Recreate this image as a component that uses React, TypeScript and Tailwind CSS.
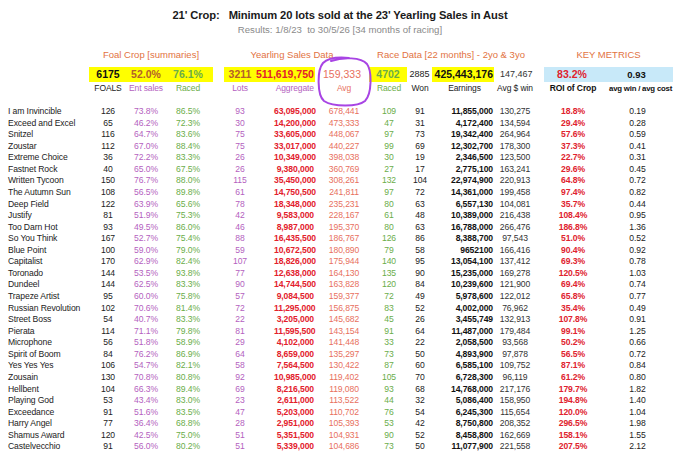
const rows: string[][] = [
  ["I am Invincible", "126", "73.8%", "86.5%", "93", "63,095,000", "678,441", "109", "91", "11,855,000", "130,275", "18.8%", "0.19"],
  ["Exceed and Excel", "65", "46.2%", "72.3%", "30", "14,200,000", "473,333", "47", "31", "4,172,400", "134,594", "29.4%", "0.28"],
  ["Snitzel", "116", "64.7%", "83.6%", "75", "33,605,000", "448,067", "97", "73", "19,342,400", "264,964", "57.6%", "0.59"],
  ["Zoustar", "112", "67.0%", "88.4%", "75", "33,017,000", "440,227", "99", "69", "12,302,700", "178,300", "37.3%", "0.41"],
  ["Extreme Choice", "36", "72.2%", "83.3%", "26", "10,349,000", "398,038", "30", "19", "2,346,500", "123,500", "22.7%", "0.31"],
  ["Fastnet Rock", "40", "65.0%", "67.5%", "26", "9,380,000", "360,769", "27", "17", "2,775,100", "163,241", "29.6%", "0.45"],
  ["Written Tycoon", "150", "76.7%", "88.0%", "115", "35,450,000", "308,261", "132", "104", "22,974,900", "220,913", "64.8%", "0.72"],
  ["The Autumn Sun", "108", "56.5%", "89.8%", "61", "14,750,500", "241,811", "97", "72", "14,361,000", "199,458", "97.4%", "0.82"],
  ["Deep Field", "122", "63.9%", "65.6%", "78", "18,348,000", "235,231", "80", "63", "6,557,130", "104,081", "35.7%", "0.44"],
  ["Justify", "81", "51.9%", "75.3%", "42", "9,583,000", "228,167", "61", "48", "10,389,000", "216,438", "108.4%", "0.95"],
  ["Too Darn Hot", "93", "49.5%", "86.0%", "46", "8,987,000", "195,370", "80", "63", "16,788,000", "266,476", "186.8%", "1.36"],
  ["So You Think", "167", "52.7%", "75.4%", "88", "16,435,500", "186,767", "126", "86", "8,388,700", "97,543", "51.0%", "0.52"],
  ["Blue Point", "100", "59.0%", "79.0%", "59", "10,672,500", "180,890", "79", "58", "9652100", "166,416", "90.4%", "0.92"],
  ["Capitalist", "170", "62.9%", "82.4%", "107", "18,826,000", "175,944", "140", "95", "13,054,100", "137,412", "69.3%", "0.78"],
  ["Toronado", "144", "53.5%", "93.8%", "77", "12,638,000", "164,130", "135", "90", "15,235,000", "169,278", "120.5%", "1.03"],
  ["Dundeel", "144", "62.5%", "83.3%", "90", "14,744,500", "163,828", "120", "84", "10,239,600", "121,900", "69.4%", "0.74"],
  ["Trapeze Artist", "95", "60.0%", "75.8%", "57", "9,084,500", "159,377", "72", "49", "5,978,600", "122,012", "65.8%", "0.77"],
  ["Russian Revolution", "102", "70.6%", "81.4%", "72", "11,295,000", "156,875", "83", "52", "4,002,000", "76,962", "35.4%", "0.49"],
  ["Street Boss", "54", "40.7%", "83.3%", "22", "3,205,000", "145,682", "45", "26", "3,455,749", "132,913", "107.8%", "0.91"],
  ["Pierata", "114", "71.1%", "79.8%", "81", "11,595,500", "143,154", "91", "64", "11,487,000", "179,484", "99.1%", "1.25"],
  ["Microphone", "56", "51.8%", "58.9%", "29", "4,102,000", "141,448", "33", "22", "2,058,500", "93,568", "50.2%", "0.66"],
  ["Spirit of Boom", "84", "76.2%", "86.9%", "64", "8,659,000", "135,297", "73", "50", "4,893,900", "97,878", "56.5%", "0.72"],
  ["Yes Yes Yes", "106", "54.7%", "82.1%", "58", "7,564,500", "130,422", "87", "60", "6,585,100", "109,752", "87.1%", "0.84"],
  ["Zousain", "130", "70.8%", "80.8%", "92", "10,985,000", "119,402", "105", "70", "6,728,300", "96,119", "61.2%", "0.80"],
  ["Hellbent", "104", "66.3%", "89.4%", "69", "8,216,500", "119,080", "93", "68", "14,768,000", "217,176", "179.7%", "1.82"],
  ["Playing God", "53", "43.4%", "83.0%", "23", "2,611,000", "113,522", "44", "32", "5,086,400", "158,950", "194.8%", "1.40"],
  ["Exceedance", "91", "51.6%", "83.5%", "47", "5,203,000", "110,702", "76", "54", "6,245,300", "115,654", "120.0%", "1.04"],
  ["Harry Angel", "77", "36.4%", "68.8%", "28", "2,951,000", "105,393", "53", "42", "8,750,800", "208,352", "296.5%", "1.98"],
  ["Shamus Award", "120", "42.5%", "75.0%", "51", "5,351,500", "104,931", "90", "52", "8,458,800", "162,669", "158.1%", "1.55"],
  ["Castelvecchio", "91", "56.0%", "80.2%", "51", "5,339,000", "104,686", "73", "50", "11,077,900", "221,558", "207.5%", "2.12"],
];

// column template shared by the labels row and the data rows
const grid =
  "grid grid-cols-[86px_28px_48px_36px_68px_40px_60px_30px_32px_57px_44px_72px_57px] pl-2 whitespace-nowrap";

const cellStyles = [
  "text-left text-[#222]",
  "text-center text-[#222]",
  "text-center text-[#b45fc0]",
  "text-center text-[#6aad4a]",
  "text-center text-[#b45fc0]",
  "text-right font-bold text-[#e3202c]",
  "text-center text-[#e8705e]",
  "text-center text-[#6aad4a]",
  "text-center text-[#222]",
  "text-right font-bold text-[#111]",
  "text-center text-[#333]",
  "text-center font-bold text-[#e0222e]",
  "text-center text-[#222]",
];

function Circle() {
  return (
    <svg
      className="absolute left-[315px] top-[8px] pointer-events-none"
      width="58"
      height="54"
      viewBox="0 0 58 54"
      fill="none"
    >
      <path
        d="M16 5 C 28 1, 46 1, 52 8 C 57 15, 57 38, 50 45 C 43 51, 18 51, 9 45 C 2 39, 2 14, 8 7 C 13 2, 24 1, 34 2"
        stroke="#a844e4"
        strokeWidth="2"
        strokeLinecap="round"
      />
    </svg>
  );
}

export default function App() {
  return (
    <div className="w-[680px] h-[453px] bg-white overflow-hidden font-['Liberation_Sans',Arial,sans-serif]">
      <div className="pt-[7px] text-center">
        <h1 className="text-[11.2px] leading-[16px] font-bold tracking-[-0.1px] text-[#1a1a1a] whitespace-pre">
          21' Crop:   Minimum 20 lots sold at the 23' Yearling Sales in Aust
        </h1>
        <p className="text-[9.6px] leading-[14px] text-[#8a8a8a] whitespace-pre">
          Results: 1/8/23  to 30/5/26 [34 months of racing]
        </p>
      </div>

      <div className="relative mt-[11px]">
        <div className="flex text-[9.5px] leading-[14px] text-[#e2733f] whitespace-nowrap">
          <div className="w-[89px]" />
          <div className="w-[124px] text-center">Foal Crop [summaries]</div>
          <div className="w-[11px]" />
          <div className="w-[136px] text-center">Yearling Sales Data</div>
          <div className="w-[9px]" />
          <div className="w-[164px] text-center">Race Data [22 months] - 2yo &amp; 3yo</div>
          <div className="w-[11px]" />
          <div className="w-[129px] text-center">KEY METRICS</div>
        </div>

        <div className="flex mt-[5px] h-[15px] text-[10.5px] leading-[15px] whitespace-nowrap">
          <div className="w-[89px]" />
          <div className="w-[124px] flex bg-[#ffff00] font-bold">
            <span className="w-[38px] text-center text-[#111]">6175</span>
            <span className="w-[38px] text-center text-[#b4602a]">52.0%</span>
            <span className="w-[46px] text-center text-[#6aad4a]">76.1%</span>
          </div>
          <div className="w-[11px]" />
          <div className="w-[91px] flex bg-[#ffff00] font-bold">
            <span className="w-[32px] text-center text-[#b4602a]">3211</span>
            <span className="w-[59px] text-right pr-[2px] text-[#e3202c]">511,619,750</span>
          </div>
          <div className="w-[54px] text-center text-[#e8705e]">159,333</div>
          <div className="w-[38px] bg-[#ffff00] text-center font-bold text-[#6aad4a]">4702</div>
          <div className="w-[25px] text-center text-[#222] text-[9px]">2885</div>
          <div className="w-[62px] bg-[#ffff00] text-right pr-[1px] font-bold text-[#111]">425,443,176</div>
          <div className="w-[50px] pl-[6px] text-left text-[#333] text-[9px]">147,467</div>
          <div className="w-[129px] flex bg-[#c8e9f9] font-bold">
            <span className="w-[56px] text-center text-[#e0222e]">83.2%</span>
            <span className="w-[73px] text-center text-[#111] text-[9.5px]">0.93</span>
          </div>
        </div>

        <div className={`${grid} text-[8.5px] leading-[13px] tracking-[-0.1px]`}>
          <div />
          <div className="text-center text-[#222]">FOALS</div>
          <div className="text-center text-[#b45fc0]">Ent sales</div>
          <div className="text-center text-[#6aad4a]">Raced</div>
          <div className="text-center text-[#b45fc0]">Lots</div>
          <div className="text-right text-[#b45fc0]">Aggregate</div>
          <div className="text-center text-[#e8705e]">Avg</div>
          <div className="text-center text-[#6aad4a]">Raced</div>
          <div className="text-center text-[#222]">Won</div>
          <div className="text-center text-[#222]">Earnings</div>
          <div className="text-center text-[#222]">Avg $ win</div>
          <div className="text-center font-bold text-[#111]">ROI of Crop</div>
          <div className="text-center font-bold text-[#111] text-[7.8px] tracking-[-0.2px]">avg win / avg cost</div>
        </div>

        <Circle />
      </div>

      <div className="mt-[11px]">
        {rows.map((r) => (
          <div key={r[0]} className={`${grid} text-[8.6px] leading-[11.56px] tracking-[-0.1px]`}>
            {r.map((v, i) => (
              <div key={i} className={cellStyles[i]}>
                {v}
              </div>
            ))}
          </div>
        ))}
      </div>
    </div>
  );
}
